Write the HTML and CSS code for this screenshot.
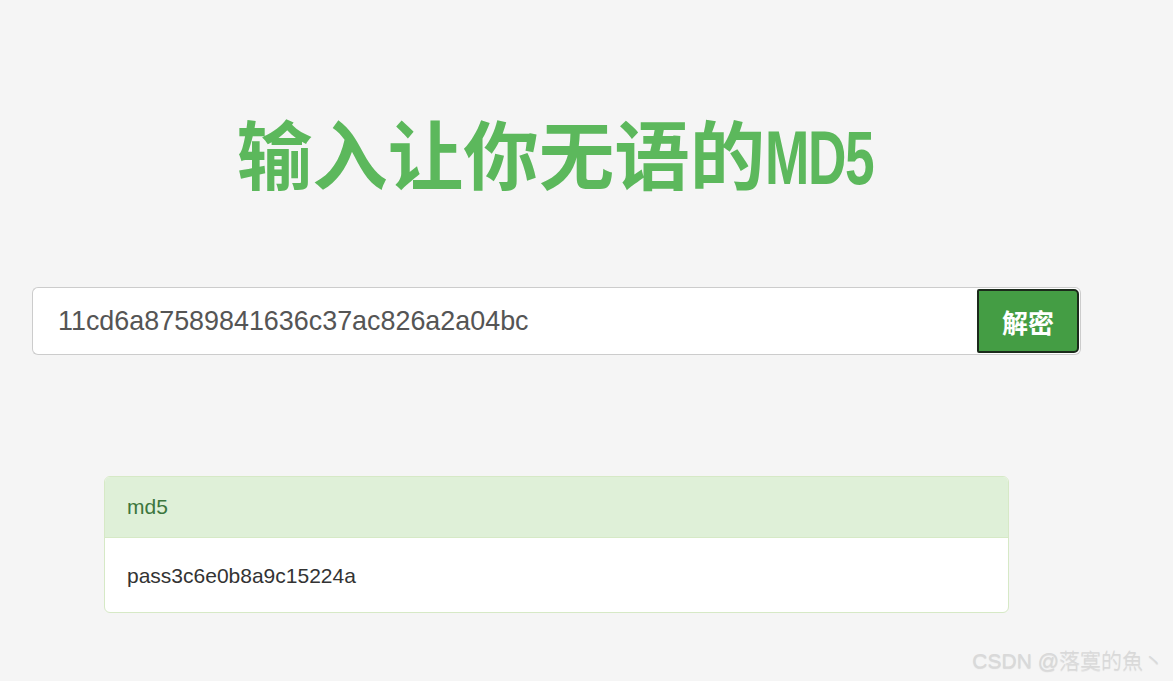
FILE: index.html
```html
<!DOCTYPE html>
<html lang="zh-CN">
<head>
<meta charset="utf-8">
<title>MD5</title>
<link rel="stylesheet" href="styles.css">
</head>
<body>
<div class="wrap">
  <h1 class="title">输入让你无语的<span class="latin">MD5</span></h1>
  <form class="search">
    <input class="field" type="text" value="11cd6a87589841636c37ac826a2a04bc">
    <div class="btn-wrap"><button class="btn" type="button">解密</button></div>
  </form>
  <div class="panel">
    <div class="panel-head">md5</div>
    <div class="panel-body">pass3c6e0b8a9c15224a</div>
  </div>
</div>
<div class="watermark">CSDN @落寞的魚丶</div>
</body>
</html>
```

FILE: styles.css
```css
html, body {
  margin: 0;
  padding: 0;
  background: #f5f5f5;
  font-family: "Liberation Sans", "Noto Sans CJK SC", sans-serif;
  height: 100%;
}
.wrap {
  width: 1050px;
  margin-left: 31px;
  padding-top: 109px;
}
.title {
  margin: 0;
  text-align: center;
  font-family: "Noto Sans CJK SC", sans-serif;
  font-weight: 700;
  font-size: 75.5px;
  line-height: 84px;
  color: #5cb85c;
}
.title .latin {
  font-family: "Liberation Sans", sans-serif;
  display: inline-block;
  font-size: 76px;
  letter-spacing: -2px;
  transform: scaleX(0.7);
  transform-origin: left center;
  width: 110px;
  text-align: left;
}
.search {
  display: flex;
  margin: 87px 0 0 1px;
  height: 68px;
  width: 1049px;
}
.field {
  flex: 1;
  box-sizing: border-box;
  height: 68px;
  border: 1px solid #ccc;
  border-right: none;
  border-radius: 6px 0 0 6px;
  background: #fff;
  padding: 0 25px;
  font-family: "Liberation Sans", sans-serif;
  font-size: 26.9px;
  color: #555;
  outline: none;
}
.btn-wrap {
  box-sizing: border-box;
  width: 104px;
  height: 68px;
  border: 1px solid #ccc;
  border-left: none;
  border-radius: 0 6px 6px 0;
  background: #fff;
  padding: 1px 1px 1px 0;
  display: flex;
}
.btn {
  flex: 1;
  box-sizing: border-box;
  border: 2px solid #1b2a1b;
  border-radius: 2px 5px 5px 2px;
  background: #449d44;
  color: #fff;
  font-family: "Noto Sans CJK SC", sans-serif;
  font-weight: 700;
  font-size: 26px;
  padding: 0;
  cursor: pointer;
}
.panel {
  margin: 121px 0 0 73px;
  width: 905px;
  box-sizing: border-box;
  border: 1px solid #d6e9c6;
  border-radius: 6px;
  background: #fff;
  overflow: hidden;
}
.panel-head {
  background: #dff0d8;
  border-bottom: 1px solid #d6e9c6;
  color: #3c763d;
  font-size: 21px;
  height: 60px;
  line-height: 60px;
  padding-left: 22px;
}
.panel-body {
  color: #333;
  font-size: 21px;
  height: 74px;
  line-height: 76px;
  padding-left: 22px;
}
.watermark {
  position: absolute;
  right: 9px;
  bottom: 7px;
  font-family: "Liberation Sans", "Noto Sans CJK SC", sans-serif;
  font-weight: 300;
  font-size: 21px;
  color: #d9d9d9;
  text-shadow: 0 1px 1px rgba(0, 0, 0, 0.12);
}
```
